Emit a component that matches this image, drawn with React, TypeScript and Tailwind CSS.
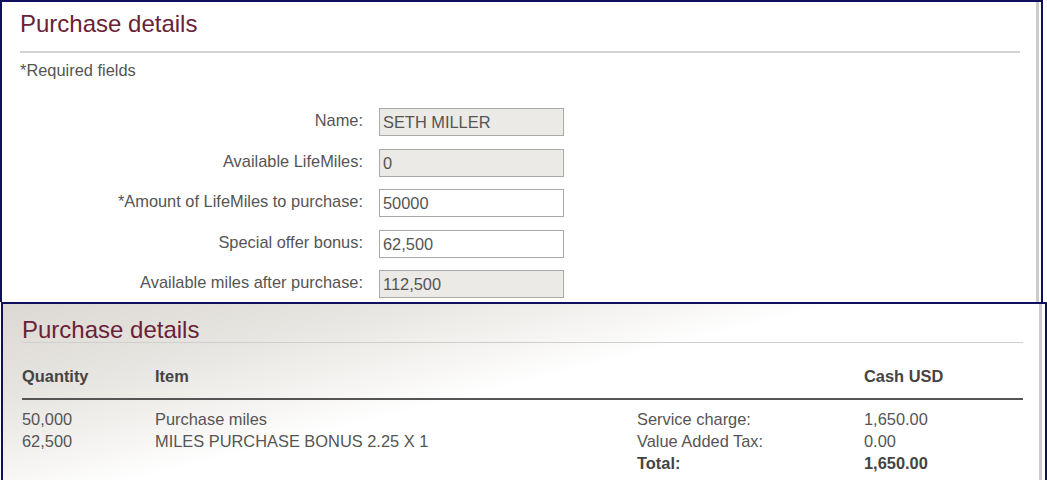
const labelCls = "text-right text-[16.4px] leading-[24px] text-[#555]";
const inputBase =
  "h-[28px] w-[185px] border border-[#a9a9a9] px-[3px] text-[16.4px] leading-[26px] text-[#555]";

function FormRow({ label, value, readOnly }: { label: string; value: string; readOnly?: boolean }) {
  return (
    <>
      <div className={labelCls}>{label}</div>
      <div className={`${inputBase} ${readOnly ? "bg-[#ebeae6]" : "bg-white"}`}>{value}</div>
    </>
  );
}

export default function App() {
  return (
    <div
      className="w-[1047px] h-[480px] overflow-hidden bg-white"
      style={{ fontFamily: '"Liberation Sans", Arial, sans-serif' }}
    >
      {/* top screenshot: form */}
      <div className="flex h-[302px] w-[1043px] border-l-2 border-r-2 border-t-2 border-[#10105e]">
        <div className="flex-1 pl-[18px] pt-[8px]">
          <h2 className="text-[24px] leading-[28px] text-[#6a2238]">Purchase details</h2>
          <div className="mt-[13px] h-[2px] w-[1000px] bg-[#d3d3d3]" />
          <p className="mt-[7px] text-[16.4px] leading-[20px] text-[#555]">*Required fields</p>

          <div className="-ml-[18px] mt-[28px] grid grid-cols-[361px_185px] gap-x-4 gap-y-[12.5px]">
            <FormRow label="Name:" value="SETH MILLER" readOnly />
            <FormRow label="Available LifeMiles:" value="0" readOnly />
            <FormRow label="*Amount of LifeMiles to purchase:" value="50000" />
            <FormRow label="Special offer bonus:" value="62,500" />
            <FormRow label="Available miles after purchase:" value="112,500" readOnly />
          </div>
        </div>
        <div className="w-[3px] bg-[#cccccc]" />
        <div className="w-[2px]" />
      </div>

      {/* bottom screenshot: summary */}
      <div className="ml-[1px] flex h-[178px] w-[1046px] border-l-2 border-r-2 border-t-2 border-[#10105e] bg-[linear-gradient(166deg,#dcd9d3_0%,#e7e5e1_22%,#f5f4f2_38%,#ffffff_48%)]">
        <div className="flex-1 pl-[19px] pt-[14px]">
          <h2 className="text-[24px] leading-[24px] text-[#6a2238]">Purchase details</h2>
          <div className="h-px w-[1001px] bg-[#cfcfcf]" />

          <div className="mt-[23px] w-[1001px] border-b-2 border-[#555] pb-[12px]">
            <div className="grid grid-cols-[133px_482px_227px_1fr] text-[16.4px] font-bold leading-[20px] text-[#444]">
              <div>Quantity</div>
              <div>Item</div>
              <div />
              <div>Cash USD</div>
            </div>
          </div>

          <div className="mt-[8px] grid grid-cols-[133px_482px_227px_1fr] text-[16.4px] leading-[22px] text-[#555]">
            <div>50,000</div>
            <div>Purchase miles</div>
            <div>Service charge:</div>
            <div>1,650.00</div>

            <div>62,500</div>
            <div>MILES PURCHASE BONUS 2.25 X 1</div>
            <div>Value Added Tax:</div>
            <div>0.00</div>

            <div />
            <div />
            <div className="font-bold text-[#444]">Total:</div>
            <div className="font-bold text-[#444]">1,650.00</div>
          </div>
        </div>
        <div className="w-[3px] bg-[#cccccc]" />
        <div className="w-[3px]" />
      </div>
    </div>
  );
}
